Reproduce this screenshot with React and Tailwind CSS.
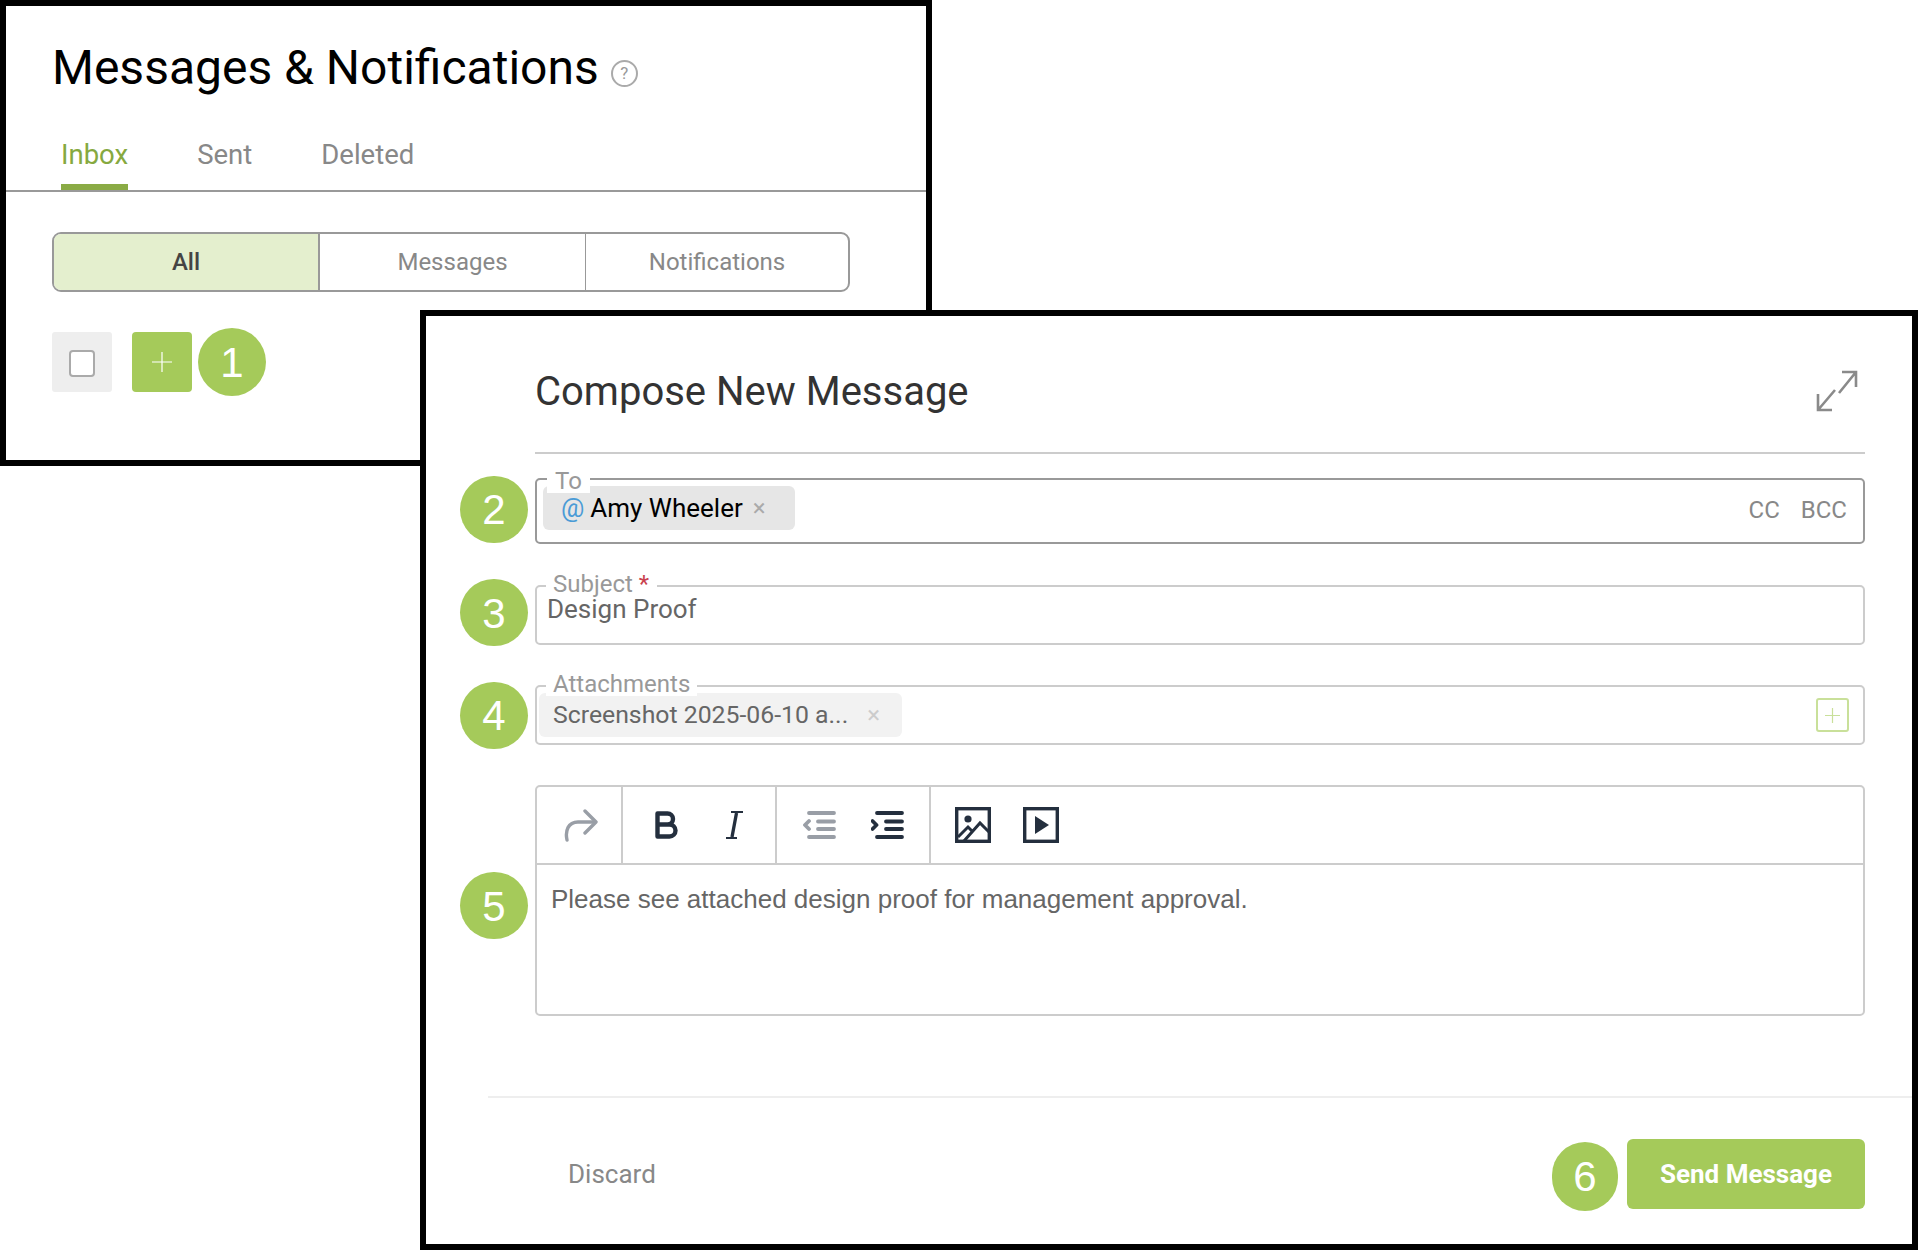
import React from 'react';

const NumberBadge = ({ n, className = 'w-[68px] h-[67px]' }) => (
  <div className={`shrink-0 rounded-full bg-[#a5ca5a] flex items-center justify-center text-white text-[42px] font-['Liberation_Sans',sans-serif] ${className}`}>
    {n}
  </div>
);

const FieldLabel = ({ children, className = '' }) => (
  <div className={`absolute z-10 bg-white text-[24px] leading-[24px] text-[#999] ${className}`}>{children}</div>
);

const RedoIcon = () => (
  <svg className="w-[34px] h-[34px]" viewBox="0 0 34 34" fill="none" stroke="#999ea6" strokeWidth="3.4" strokeLinecap="round" strokeLinejoin="round">
    <path d="M3 32c-2-9 1-18 11-18h17" />
    <path d="M21 3l11 11-11 11" />
  </svg>
);

const BoldIcon = () => (
  <svg className="w-[24px] h-[28px]" viewBox="0 0 24 28" fill="none" stroke="#242f3e" strokeWidth="4.4" strokeLinejoin="round">
    <path d="M2.5 2.5h10a5.5 5.5 0 0 1 0 11h-10zM2.5 13.5h12a6 6 0 0 1 0 12h-12z" />
  </svg>
);

const ItalicIcon = () => (
  <svg className="w-[17px] h-[28px]" viewBox="0 0 17 28" fill="none" stroke="#242f3e">
    <path d="M10.5 2L6 26" strokeWidth="3.4" />
    <path d="M5 1h12M0 27h11" strokeWidth="2" />
  </svg>
);

const IndentIcon = ({ color, flip }) => (
  <svg className="w-[33px] h-[28px]" viewBox="0 0 33 28" fill="none" stroke={color} strokeWidth="3.8" strokeLinecap="round" strokeLinejoin="round">
    <path d="M6 2h25M15 10.5h16M15 18h16M6 26h25" />
    {flip ? <path d="M1.5 10l4 4-4 4" /> : <path d="M6 10l-4 4 4 4" />}
  </svg>
);

const ImageIcon = () => (
  <svg className="w-[36px] h-[36px]" viewBox="0 0 36 36" fill="none" stroke="#242f3e" strokeWidth="3.4">
    <rect x="1.7" y="1.7" width="32.6" height="32.6" />
    <circle cx="13" cy="12" r="3.6" fill="#242f3e" stroke="none" />
    <path d="M3 30l10-10 5 5M9 34l16-18 10 10" strokeWidth="3" />
  </svg>
);

const VideoIcon = () => (
  <svg className="w-[36px] h-[36px]" viewBox="0 0 36 36">
    <rect x="1.7" y="1.7" width="32.6" height="32.6" fill="none" stroke="#242f3e" strokeWidth="3.4" />
    <path d="M12 9l14 9-14 9z" fill="#242f3e" />
  </svg>
);

const ExpandIcon = () => (
  <svg className="w-[42px] h-[42px]" viewBox="0 0 42 42" fill="none" stroke="#8a8a8a" strokeWidth="2.6">
    <path d="M23 23L40 2M26 2h14v15" />
    <path d="M2 40l17-20M2 24v16h14" />
  </svg>
);

const App = () => {
  return (
    <div className="relative w-[1918px] h-[1258px] bg-white overflow-hidden font-['Roboto',sans-serif]">
      {/* back window */}
      <div className="absolute left-0 top-0 w-[932px] h-[466px] border-[6px] border-black bg-white">
        <div className="flex items-center pl-[46px] pt-[36px] h-[87px]">
          <h1 className="text-[48px] leading-[54px] text-black">Messages &amp; Notifications</h1>
          <div className="ml-[12px] mt-[12px] w-[27px] h-[27px] rounded-full border-2 border-[#aaa] flex items-center justify-center text-[17px] text-[#999]">?</div>
        </div>

        <div className="flex gap-[69px] pl-[55px] h-[99px] pt-[46px] border-b-2 border-[#999] text-[27.5px] leading-[32px] text-[#888]">
          <div className="relative text-[#86a93f]">
            Inbox
            <div className="absolute left-0 right-0 top-[45px] h-[6px] bg-[#8aab45]" />
          </div>
          <div>Sent</div>
          <div>Deleted</div>
        </div>

        <div className="ml-[46px] mt-[40px] w-[798px] h-[60px] flex border-2 border-[#999] rounded-[9px] overflow-hidden text-[24px]">
          <div className="w-[266px] bg-[#e4efce] border-r-2 border-[#999] flex items-center justify-center font-medium text-[#444]">All</div>
          <div className="w-[266px] border-r border-[#999] flex items-center justify-center text-[#888]">Messages</div>
          <div className="flex-1 flex items-center justify-center text-[#888]">Notifications</div>
        </div>

        <div className="flex items-start ml-[46px] mt-[40px]">
          <div className="w-[60px] h-[60px] bg-[#eee] rounded-[3px] flex items-center justify-center">
            <div className="mt-[3px] w-[26px] h-[27px] bg-white border-2 border-[#aaa] rounded-[4px]" />
          </div>
          <div className="ml-[20px] w-[60px] h-[60px] bg-[#a5ca5a] rounded-[4px] flex items-center justify-center text-white">
            <svg className="w-[20px] h-[20px]" viewBox="0 0 20 20" stroke="currentColor" strokeWidth="1.2"><path d="M10 0v20M0 10h20" /></svg>
          </div>
          <NumberBadge n="1" className="w-[68px] h-[68px] ml-[6px] -mt-[4px]" />
        </div>
      </div>

      {/* compose window */}
      <div className="absolute left-[420px] top-[310px] w-[1498px] h-[940px] border-[6px] border-black bg-white">
        <div className="ml-[109px] mr-[47px] h-[138px] border-b-2 border-[#ccc] flex items-start justify-between">
          <h2 className="mt-[52px] text-[40px] leading-[48px] text-[#333]">Compose New Message</h2>
          <div className="mt-[54px] mr-[7px]"><ExpandIcon /></div>
        </div>

        <div className="flex items-start ml-[34px] mt-[22px]">
          <NumberBadge n="2" />
          <div className="relative ml-[7px] mt-[2px] w-[1330px] h-[66px] border-2 border-[#999] rounded-[5px] flex items-center justify-between">
            <FieldLabel className="left-[10px] -top-[11px] w-[43px] h-[24px] pl-[8px] text-[#888]">To</FieldLabel>
            <div className="relative ml-[6px] mb-[6px] w-[252px] h-[44px] bg-[#e6e6e6] rounded-[6px] flex items-center pl-[18px] text-[26px] text-black">
              <span className="text-[#4a9bd6]">@</span>
              <span className="ml-[6px]">Amy Wheeler</span>
              <span className="ml-[10px] text-[24px] text-[#aaa]">×</span>
            </div>
            <div className="flex gap-[21px] pr-[16px] pb-[2px] text-[24px] text-[#888]">
              <span>CC</span>
              <span>BCC</span>
            </div>
          </div>
        </div>

        <div className="flex items-start ml-[34px] mt-[35px]">
          <NumberBadge n="3" className="w-[68px] h-[67px] pt-[2px]" />
          <div className="relative ml-[7px] mt-[6px] w-[1330px] h-[60px] border-2 border-[#ccc] rounded-[5px] pl-[10px] pt-[6px] text-[26px] leading-[32px] text-[#666]">
            <FieldLabel className="left-[9px] -top-[15px] pl-[7px] pr-[8px]">
              Subject <span className="text-[#c9414e]">*</span>
            </FieldLabel>
            Design Proof
          </div>
        </div>

        <div className="flex items-start ml-[34px] mt-[36px]">
          <NumberBadge n="4" />
          <div className="relative ml-[7px] mt-[3px] w-[1330px] h-[60px] border-2 border-[#ccc] rounded-[5px] flex items-center justify-between">
            <div className="ml-[2px] w-[363px] h-[44px] bg-[#f2f2f2] rounded-[6px] flex items-center pl-[14px] text-[24.8px] text-[#666]">
              <span>Screenshot 2025-06-10 a...</span>
              <span className="ml-[19px] text-[24px] text-[#ccc]">×</span>
            </div>
            <div className="mr-[14px] w-[33px] h-[34px] border-2 border-[#c9e09a] rounded-[3px] flex items-center justify-center">
              <svg className="w-[15px] h-[15px]" viewBox="0 0 15 15" stroke="#c9e09a" strokeWidth="1.2"><path d="M7.5 0v15M0 7.5h15" /></svg>
            </div>
            <FieldLabel className="left-[9px] -top-[15px] pl-[7px] pr-[7px]">Attachments</FieldLabel>
          </div>
        </div>

        <div className="flex items-start ml-[34px] mt-[36px]">
          <NumberBadge n="5" className="w-[68px] h-[67px] mt-[87px] pt-[1px]" />
          <div className="ml-[7px] w-[1330px] h-[231px] border-2 border-[#ccc] rounded-[5px]">
            <div className="flex h-[78px] border-b-2 border-[#ccc]">
              <div className="w-[86px] border-r-2 border-[#ccc] flex items-center pl-[27px]"><RedoIcon /></div>
              <div className="w-[154px] border-r-2 border-[#ccc] flex items-center pl-[32px]">
                <BoldIcon />
                <div className="ml-[47px]"><ItalicIcon /></div>
              </div>
              <div className="w-[154px] border-r-2 border-[#ccc] flex items-center pl-[26px] gap-[35px]">
                <IndentIcon color="#999ea6" />
                <IndentIcon color="#242f3e" flip />
              </div>
              <div className="flex items-center pl-[24px] gap-[32px]">
                <ImageIcon />
                <VideoIcon />
              </div>
            </div>
            <p className="pl-[14px] pt-[18px] text-[26px] leading-[32px] text-[#666] font-['Liberation_Sans',sans-serif]">
              Please see attached design proof for management approval.
            </p>
          </div>
        </div>

        <div className="ml-[62px] mt-[80px] h-[2px] bg-[#eee]" />

        <div className="flex items-start justify-between ml-[142px] mr-[47px] mt-[41px]">
          <button className="mt-[20px] text-[26px] leading-[30px] text-[#888]">Discard</button>
          <div className="flex items-start">
            <NumberBadge n="6" className="w-[66px] h-[69px] mt-[3px]" />
            <button className="ml-[9px] w-[238px] h-[70px] bg-[#a5ca5a] rounded-[6px] text-white text-[26px] font-bold">Send Message</button>
          </div>
        </div>
      </div>
    </div>
  );
};

export default App;
